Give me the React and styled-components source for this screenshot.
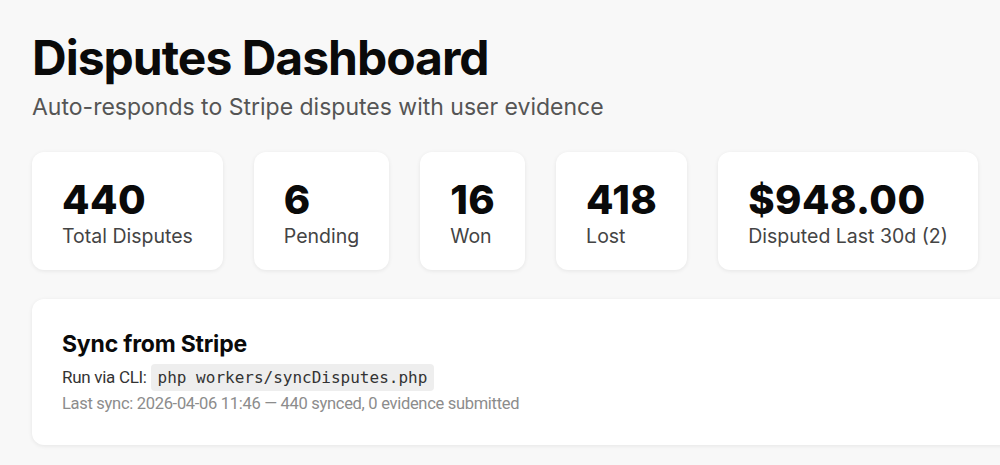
import React from "react";
import styled, { createGlobalStyle } from "styled-components";

const GlobalStyle = createGlobalStyle`
  html, body {
    margin: 0;
    padding: 0;
    background: #f8f8f8;
    overflow: hidden;
  }
  body {
    font-family: "Inter", "Noto Sans", sans-serif;
    color: #111;
  }
`;

const Page = styled.div`
  width: 1100px;
  padding: 28px 32px 32px;
  box-sizing: border-box;
`;

const Title = styled.h1`
  margin: 0;
  font-size: 48px;
  line-height: 60px;
  font-weight: 700;
  letter-spacing: -1px;
  color: #0a0a0a;
`;

const Subtitle = styled.p`
  margin: 5px 0 0;
  font-size: 23px;
  line-height: 28px;
  color: #555;
`;

const StatsRow = styled.div`
  display: flex;
  gap: 31px;
  margin-top: 31px;
`;

const Card = styled.div`
  background: #fff;
  border-radius: 12px;
  box-shadow: 0 1px 4px rgba(0, 0, 0, 0.08);
`;

const StatCard = styled(Card)`
  padding: 24px 30px 22px;
`;

const StatValue = styled.div`
  font-size: 40px;
  line-height: 48px;
  font-weight: 800;
  letter-spacing: 0.4px;
  color: #0a0a0a;
`;

const StatLabel = styled.div`
  font-size: 19.5px;
  line-height: 24px;
  color: #444;
`;

const SyncCard = styled(Card)`
  margin-top: 29px;
  padding: 30px 30px 30px;
`;

const SyncTitle = styled.h2`
  margin: 0;
  font-size: 23px;
  line-height: 30px;
  font-weight: 700;
  letter-spacing: -0.2px;
  color: #0a0a0a;
`;

const SyncLine = styled.div`
  margin-top: 4px;
  font-family: "Roboto", "Inter", sans-serif;
  font-size: 17px;
  line-height: 28px;
  letter-spacing: -0.3px;
  color: #333;
`;

const Code = styled.code`
  font-family: "DejaVu Sans Mono", "Liberation Mono", monospace;
  font-size: 16px;
  letter-spacing: 0;
  background: #eeeeee;
  border-radius: 4px;
  padding: 4px 7px;
  color: #333;
`;

const SyncMeta = styled.div`
  font-family: "Roboto", "Inter", sans-serif;
  font-size: 16.5px;
  line-height: 23px;
  letter-spacing: -0.3px;
  color: #8c8c8c;
`;

const stats = [
  { value: "440", label: "Total Disputes" },
  { value: "6", label: "Pending" },
  { value: "16", label: "Won" },
  { value: "418", label: "Lost" },
  { value: "$948.00", label: "Disputed Last 30d (2)" },
];

const App = () => {
  return (
    <>
      <GlobalStyle />
      <Page>
        <Title>Disputes Dashboard</Title>
        <Subtitle>Auto-responds to Stripe disputes with user evidence</Subtitle>
        <StatsRow>
          {stats.map((s) => (
            <StatCard key={s.label}>
              <StatValue>{s.value}</StatValue>
              <StatLabel>{s.label}</StatLabel>
            </StatCard>
          ))}
        </StatsRow>
        <SyncCard>
          <SyncTitle>Sync from Stripe</SyncTitle>
          <SyncLine>
            Run via CLI: <Code>php workers/syncDisputes.php</Code>
          </SyncLine>
          <SyncMeta>
            Last sync: 2026-04-06 11:46 — 440 synced, 0 evidence submitted
          </SyncMeta>
        </SyncCard>
      </Page>
    </>
  );
};

export default App;
